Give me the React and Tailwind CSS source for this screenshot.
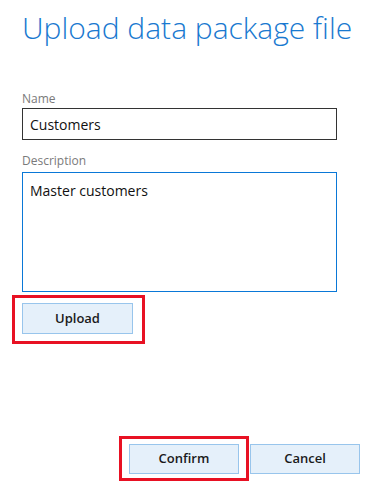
export default function App() {
  const font = { fontFamily: '"Open Sans", "Noto Sans", sans-serif' };
  return (
    <div
      className="relative w-[383px] h-[495px] bg-white overflow-hidden"
      style={font}
    >
      <div className="flex flex-col pl-[22px] pt-[6px]">
        <h1 className="text-[30px] leading-[44px] font-light text-[#1979d0]">
          Upload data package file
        </h1>
        <label className="mt-[41px] text-[12px] leading-[16px] text-[#7a7a7a]">Name</label>
        <div className="mt-[1px] w-[315px] h-[32px] border-[1.5px] border-[#333] flex items-center px-[7px] text-[14px] text-[#111]">
          Customers
        </div>
        <label className="mt-[13px] text-[12px] leading-[16px] text-[#7a7a7a]">Description</label>
        <div className="mt-[3px] w-[315px] h-[120px] border border-[#0a78d7] px-[7px] pt-[8px] text-[14px] leading-[20px] text-[#111]">
          Master customers
        </div>
        <div className="mt-[11px]">
          <button className="w-[111px] h-[31px] bg-[#e5f0fa] border border-[#98c5ec] text-[13px] font-semibold text-[#1a1a1a]">
            Upload
          </button>
        </div>
        <div className="mt-[110px] flex gap-[11px] pl-[107px]">
          <button className="w-[110px] h-[30px] bg-[#e5f0fa] border border-[#98c5ec] text-[13px] font-semibold text-[#1a1a1a]">
            Confirm
          </button>
          <button className="w-[110px] h-[30px] bg-[#e5f0fa] border border-[#98c5ec] text-[13px] font-semibold text-[#1a1a1a]">
            Cancel
          </button>
        </div>
      </div>
      <div className="absolute left-[12px] top-[295px] w-[133px] h-[49px] border-[3px] border-[#e81123]" />
      <div className="absolute left-[119px] top-[436px] w-[130px] h-[45px] border-[3px] border-[#e81123]" />
    </div>
  );
}
